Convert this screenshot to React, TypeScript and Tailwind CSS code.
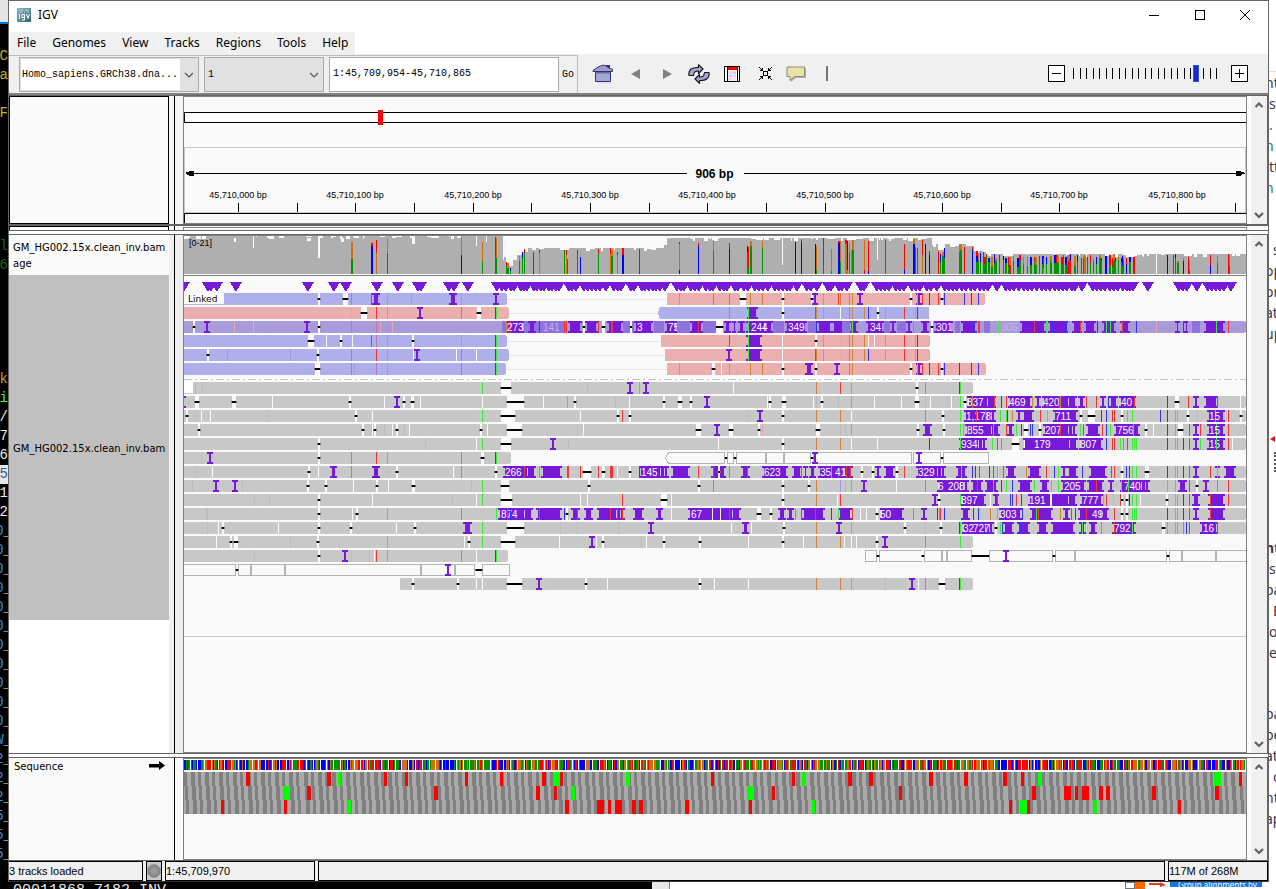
import React from "react";

const INK: Record<string, string> = {
  g: "#35ee35",
  o: "#cc8433",
  r: "#f23434",
  b: "#3434f2",
  w: "#fafafa",
  k: "#bcbcbc",
  m: "#b478b4",
  n: "#e8a8b0",
  y: "#9c9ce0",
};
const BLUE = "#afafeb";
const PINK = "#ebafaf";
const GRAY = "#c8c8c8";
const LILAC = "#a99bd9";
const INS = "#7719d9";
const BASE: Record<string, string> = { g: "#009600", b: "#0000ff", r: "#ff0000", o: "#d17105" };

function makeRandom(seed: number) {
  let s = seed;
  return () => {
    s = (s * 1103515245 + 12345) % 2147483648;
    return s / 2147483648;
  };
}

/*
 * Each read row is a string of marks:
 *   a letter and x        one-pixel mismatch line
 *   d a[-b]               deletion
 *   i x                   small insertion
 *   p a-b                 wide insertion
 *   l a-b                 pale insertion
 *   t x:label             insertion size
 *   u x:label             pale insertion size
 */
type Row = { y: number; segs: [number, number, string][]; boxes?: [number, number][]; thin?: [number, number]; marks: string };

const TAIL = "b1167 g1175 g1177 b1183 r1189 i1196";
const ROWS: Row[] = [
  { y: 293, segs: [[184, 507, BLUE], [667, 985, PINK]], thin: [507, 667], marks: "d319 d343-348 o351 r371 p372-380 g387 y411 p449-457 y461 i496 b495 g679 o713 n722 m729 d740-746 o750 o762 d783 d811-813 i815 g823 r838 o840 o849 o852 i860 d911 p916-922 g917 r922 b929 r938 d941-943 b944 b964 b971 b978" },
  { y: 307, segs: [[184, 509, PINK], [660, 929, BLUE]], thin: [509, 660], marks: "n190 n351 d361-367 r376 g387 i420 o461 d477-481 b495 g496 m729 p747-758 g748 d783 r815 o816 g823 w840 o849 o852 o864 b868 d878 g885 r904 g915 b917" },
  { y: 321, segs: [[184, 1246, LILAC]], marks: "d194 i207 n234 y241 n253 y268 i307 d319 o351 m376 n380 g387 n392 y461 y469 l502-508 p506-524 o506 r510 r524 t507:273 l524-540 l540-566 u543:141 p528-536 b533 b539 r564 r566 p568-582 b577 d584 p585-598 r598 d602-605 p607-623 r611 r612 l623-634 d631 p634-653 t637:3 l654-664 p665-677 t668:75 l677-690 p690-703 r698 l703-716 d716-723 p724-731 p732-736 p738-745 p746-773 g748 t751:244 l773-784 p785-807 t788:349 l808-816 p817-832 b816 b823 p832-845 r845 l842-850 p850-858 r851 g852 p866-884 t870:34 l884-890 p890-896 l897-906 p906-912 o913 p921-929 d931-933 p934-953 t936:301 l955-960 p961-977 b974 r978 r979 l984-990 g998 u1001:305 p1020-1046 r1034 g1046 p1048-1068 b1052 b1066 p1072-1082 r1080 p1084-1096 b1097 r1106 p1102-1116 g1106 g1110 p1120-1130 r1122 g1133 g1135 b1136 n1156 g1175 p1175-1180 b1183 p1184-1188 l1192-1200 p1204-1225 g1216 r1228" },
  { y: 335, segs: [[184, 507, BLUE], [661, 930, PINK]], thin: [507, 661], marks: "d308-314 w326 d340-342 w352 r371 m376 g387 d413 y461 b495 g496 r729 p746-762 g748 w782 d816 g823 n840 o849 o852 o864 w868 w874 g885 r904 g915 b917" },
  { y: 349, segs: [[184, 509, BLUE], [665, 930, PINK]], thin: [509, 665], marks: "d208 y227 y290 d318 o351 r376 g387 w413 i417 w456 o461 w476 b495 g496 i729 p746-762 g748 w782 r815 o816 g823 n840 o849 o852 o864 b868 g885 r904 g915 b917" },
  { y: 363, segs: [[184, 506, BLUE], [667, 986, PINK]], thin: [506, 667], marks: "d315-320 o351 y354 m376 g387 o461 b495 g496 g679 d712-715 w721 g729 n736 o750 o762 d783 p805-813 d816 i837 o849 o852 d911 p916-922 g917 r922 b929 r938 d941-943 b944 b959 b971 b978" },
  { y: 382, segs: [[184, 973, GRAY]], marks: "k195 k202 g482 d501-511 k587 i630 y639 i646 w733 o816 r840 g851 d917 o925 b959 g960" },
  { y: 396, segs: [[184, 1246, GRAY]], marks: "i183 d195-199 d232-236 w272 d350 w384 i397 d404 d411-414 w420 w482 d507-524 w543 g567 d575 k615 w629 d664 d678-682 d691 i707 w767 d770 d782-786 w813 k816 d821-823 k838 g851 w874 w901 d915-919 k925 w930 k947 w951 g960 d965 p967-996 t967:837 o972 r994 b1001 r1006 p1008-1032 t1009:469 o1032 p1035-1041 p1042-1077 t1043:420 r1059 o1060 p1078-1085 r1086 r1096 p1100-1106 b1108 p1109-1118 p1119-1136 t1121:40 r1134 b1167 d1175-1179 r1188 i1196 p1204-1218 r1217 w1240" },
  { y: 410, segs: [[184, 1246, GRAY]], marks: "d187 k195 w201 w210 k267 d356 w372 g482 d501-515 w580 d618 r622 d630 k748 i760 d783 o816 o840 w851 o925 d943 g960 p964-996 t966:1,178 r976 r985 g1000 g1006 b1007 o1012 p1016-1022 p1022-1034 r1040 g1047 p1053-1078 t1055:711 d1081 d1088-1095 b1101 b1106 r1112 r1114 d1122 g1127 g1132 b1160 b1167 g1175 g1177 d1188 k1197 p1207-1225 g1215 t1209:15 r1228 d1241" },
  { y: 424, segs: [[184, 1246, GRAY]], marks: "d199 d363 w372 d375 k384 w392 d397 k404 w409 d481 w487 d507-522 k577 w583 d696-701 i717 d729-733 d759 n762 d816-820 k840 k845 g851 d918 p923-932 d944 g960 p965-1000 t967:855 g993 g963 r1006 p1007-1014 g1016 b1021 d1024-1028 b1030 b1032 d1040 p1043-1077 t1045:207 r1060 g1080 r1083 p1086-1100 r1102 b1106 g1110 p1114-1140 t1117:756 g1133 d1146 w1153 b1167 g1175 d1178-1183 r1189 i1196 r1200 p1207-1225 g1216 t1209:15 r1228" },
  { y: 438, segs: [[184, 1246, GRAY]], marks: "d319 k425 w476 g482 d501-511 i553 k568 w718 d783 o816 o840 w851 w877 b929 p959-987 t961:934 g960 g992 r997 o1001 d1012-1019 w1024 p1023-1078 t1034:179 p1079-1103 t1080:807 b1106 r1112 r1114 g1120 o1123 r1127 g1132 g1134 g1136 " + TAIL + " g1200 p1207-1225 t1209:15 g1216 r1228 w1232" },
  { y: 452, segs: [[184, 511, GRAY]], boxes: [[665, 725], [727, 734], [736, 766], [766, 784], [784, 811], [813, 912], [913, 941], [943, 989]], marks: "k201 i210 d319 o351 r376 g387 o461 d481-484 b495 g496 d726 d735 d812 i815 i919 d942" },
  { y: 466, segs: [[184, 1246, GRAY]], marks: "k195 w212 d309 w318 p330-337 o351 p372-380 k387 d397 w453 o461 d496 p503-536 t505:266 b522 r524 o539 p541-562 r567 r568 r580 d583-591 r598 d602-605 r610 r611 r612 w617 d630 p639-669 b639 t641:145 p671-690 r698 p711-726 r713 d719 o729 p741-750 r747 p762-788 t764:623 p792-802 r801 p803-808 p809-816 p818-853 t820:35 t835:41 r846 r850 g831 d862 d873 i878 p884-895 d897 r904 p916-946 t918:329 p956-967 g961 b972 b975 r979 b989 r993 g997 r1003 p1006-1016 o1026 p1028-1041 r1046 b1054 g1058 p1061-1067 p1067-1078 b1082 p1089-1107 r1111 r1114 d1122 b1126 b1129 g1132 g1136 d1145-1149 " + TAIL + " r1210 p1215-1220 g1217 p1224-1236" },
  { y: 480, segs: [[184, 1246, GRAY]], marks: "k192 i216 i235 k242 d308 d326 w353 d377 w388 d412-415 k471 g482 d501-509 d589 d699 o713 d783 d809 o816 y840 k845 g851 i864 w896 o925 p937-969 t938:6 t948:208 p971-983 r977 p985-998 g993 b1001 g1006 b1012 p1018-1032 g1034 p1040-1049 g1051 g1058 p1061-1086 t1064:205 p1087-1104 r1096 p1108-1114 p1120-1150 t1124:740 g1121 g1128 y1167 g1175 p1178-1187 r1189 d1197 i1206 o1217 r1228" },
  { y: 494, segs: [[184, 1246, GRAY]], marks: "k254 k269 d319 w372 k452 w476 g482 d501-512 w580 w587 r622 d661-667 w671 d783 o816 w837 r840 i935 d939 g960 p961-986 t961:897 w990 p993-999 r997 b1010 b1012 r1016 b1021 p1028-1077 t1029:191 w1050 w1051 p1080-1103 t1082:777 g1103 r1106 n1113 r1120 d1122 d1127 b1129 g1132 g1136 w1140 d1167 g1175 g1177 b1183 r1189 p1192-1200 p1208-1225 r1210 r1228" },
  { y: 508, segs: [[184, 1246, GRAY]], marks: "k206 k207 d319 w352 d357 g387 o461 g496 p498-533 t501:874 r507 b510 p536-562 r539 b564 d567 p571-580 r577 p584-593 p597-625 r610 r617 r622 p633-644 p656-663 w671 p688-741 t691:67 w712 w720 r729 d757-761 d771 p778-786 p787-794 o795 r801 p802-825 r815 b831 p838-852 g838 r852 w860 w866 d877 p880-904 t880:50 o913 p921-927 b937 o939 r940 b944 p961-970 b973 b978 o990 g997 p999-1022 t1000:303 b1022 p1030-1053 r1038 g1036 o1060 p1063-1070 r1071 b1075 p1078-1109 r1086 t1092:49 r1114 d1122 d1127 g1132 g1134 g1136 " + TAIL + " p1208-1225 r1210" },
  { y: 522, segs: [[184, 1246, GRAY]], marks: "k207 w218 d222-224 w278 d319 d351 w396 d415 p463-472 g482 d507-524 k560 k577 k618 i651 w731 p742-749 w751 d783-785 o816 i839 g851 d905 k925 d941 b959 g960 p962-994 t963:32 t973:727 d996 g1000 b1002 p1003-1014 p1017-1030 b1020 p1037-1048 p1051-1075 p1079-1086 g1082 p1089-1097 o1101 p1112-1136 r1114 t1114:792 g1132 d1162-1165 y1167 g1175 g1177 o1183 b1186 r1189 p1200-1218 t1203:16 r1217" },
  { y: 536, segs: [[184, 973, GRAY]], marks: "w216 d231 d234-238 k290 d318 y387 w464 d469 g482 d501-515 w559 i592 w596 d603 k641 w646 d664 d700 w748 d783 w803 o816 o840 w844 w851 w856 d877 i885 o925 g960" },
  { y: 550, segs: [[184, 508, GRAY]], boxes: [[865, 877], [879, 923], [924, 942], [942, 947], [947, 972], [989, 1053], [1055, 1075], [1075, 1167], [1169, 1182], [1182, 1216], [1216, 1247]], marks: "k254 d319 i345 k351 k369 w374 r376 g387 o461 w476 b495 g496 d878 d923 d972-989 i1006 d1054 d1168" },
  { y: 564, segs: [], boxes: [[180, 236], [238, 251], [251, 285], [285, 421], [421, 455], [455, 475], [482, 510]], marks: "d237 i448 d476-482" },
  { y: 578, segs: [[400, 973, GRAY]], marks: "d413 d458 w476 w482 d507-522 i539 d586 w607 d700 w714 w748 o816 o840 g851 k885 i912 w918 o925 d939-945 b959 g960" },
];

function Mark({ mark, y }: { mark: string; y: number }) {
  const kind = mark[0];
  const [head, label] = mark.slice(1).split(":");
  const [a, bRaw] = head.split("-").map(Number);
  if (kind === "t" || kind === "u") {
    return (
      <text x={a} y={y + 10} fontSize="10" fill={kind === "t" ? "#fff" : "#c4b4ec"}>
        {label}
      </text>
    );
  }
  if (kind === "d") {
    const from = bRaw ? a : a - 1;
    const to = bRaw || a + 1;
    return (
      <g>
        <rect x={from} y={y} width={to - from} height={12} fill="#fafafa" />
        <rect x={from - 1} y={y + 5} width={to - from + 2} height={2} fill="#777" />
        <rect x={from} y={y + 5} width={to - from} height={2} fill="#000" />
      </g>
    );
  }
  if (kind === "i") {
    return (
      <g fill={INS}>
        <rect x={a - 3} y={y} width={6} height={2} />
        <rect x={a - 1} y={y} width={2} height={12} />
        <rect x={a - 3} y={y + 10} width={6} height={2} />
      </g>
    );
  }
  if (kind === "p") {
    const w = bRaw - a;
    return (
      <g fill={INS}>
        <rect x={a} y={y} width={w} height={2} />
        <rect x={a + 2} y={y} width={Math.max(1, w - 4)} height={12} />
        <rect x={a} y={y + 10} width={w} height={2} />
        {w > 26 && w % 2 === 0 && <rect x={bRaw - 5} y={y + 2} width={1} height={8} fill="#c9bfe6" />}
        {w > 26 && <rect x={bRaw - 9} y={y + 2} width={1} height={8} fill="#c9bfe6" />}
      </g>
    );
  }
  if (kind === "l") return <rect x={a} y={y} width={bRaw - a} height={12} fill="#8f72dc" />;
  return <rect x={a} y={y} width={1} height={12} fill={INK[kind]} />;
}

function Reads() {
  return (
    <g>
      {ROWS.map((row) => (
        <g key={row.y}>
          {row.thin && <rect x={row.thin[0]} y={row.y + 6} width={row.thin[1] - row.thin[0]} height={1} fill="#e4e4e4" />}
          {row.segs.map(([a, b, c]) => (
            <path
              key={a}
              fill={c}
              d={a === 660 ? `M${a} ${row.y}H${b}v12H${a}l-2 -6z` : `M${a} ${row.y}H${b - 1}l1 2v8l-1 2H${a}z`}
            />
          ))}
          {row.boxes?.map(([a, b]) =>
            a === 665 ? (
              <path key={a} d="M668.5 452.5H724.5V463.5H668.5L665.5 458z" fill="#fafafa" stroke="#b4b4b4" />
            ) : (
              <rect key={a} x={a + 0.5} y={row.y + 0.5} width={b - a - 1} height={11} fill="#fafafa" stroke="#b4b4b4" />
            ),
          )}
          {row.marks.split(" ").map((m, i) => (
            <Mark key={i} mark={m} y={row.y} />
          ))}
        </g>
      ))}
      <rect x={184} y={382} width={9} height={11} fill="#fff" />
    </g>
  );
}

// x, width, then base letter and the y where that colour starts
const COVERAGE_BARS =
  "351 2 o242 g259;371 2 r243 b246;376 1 r240 o253 g273;387 1 o239 b254 g255;461 1 o236 b255;482 1 o242 g261;495 1 r237 g257;496 1 o238 g258;" +
  "506 1 r262 g266;507 2 o263 g268;510 1 b268 g271;519 1 o256 g261;522 1 b252 g258;524 1 r249 g253;533 1 r252 b273;539 1 r250 o253;564 1 g250;566 1 r250 o255;567 1 g259;577 1 r250 g254;580 1 b257;598 1 r249 g254;610 1 r248 o254;611 2 o250 g256;617 1 r252 o255;622 2 r248 b255;639 1 r249 b273;" +
  "679 1 r242 o244 b270;698 1 r243 b246;713 1 o241 g251;729 1 r243 b249;747 1 b246 g252;748 1 r247 g268;750 2 o241 g246;762 1 o241 g248;795 1 b242;801 1 r239 b243;815 1 b244;816 1 o246 g270;823 1 r238 g265;831 1 o249 g271;838 2 r241 b243;840 1 o241 g262;845 2 r240 o244;847 1 b241 o270;849 1 o243 g252;851 1 o250;852 2 o240 g250;" +
  "864 1 o240 r270;868 1 r241 b271;885 1 r240 g241;904 1 r244 b270;913 2 o239 b244;915 1 g247;917 1 r248 g251;922 1 r240 o255;925 1 b244;929 1 r251 b255;938 1 o250 r252;940 1 b254 g262;942 2 o252 g256;944 1 b248 g258;959 1 o244 g252;960 2 o244 g250;964 1 r247 b273;972 1 r247 b250;976 2 r251 b256 g262;978 1 o253 g260;980 1 b253 g262;983 1 r252 g262;" +
  "1167 1 b255;1173 1 g255;1175 1 b254 g258;1177 2 o261 g263;1183 1 o258 b261;1188 1 r257;1189 1 o260 g270;1210 1 r255 b265;1217 1 o256 g263;1228 1 r254;1229 1 o255 g266";

function coverageTop(x: number) {
  if (x < 500) return 236;
  if (x < 503) return 247;
  if (x < 506) return 257;
  if (x < 511) return 266;
  if (x < 515) return 260;
  if (x < 522) return 255;
  if (x < 524) return 252;
  if (x < 662) return 248;
  if (x < 667) return 245;
  if (x < 929) return 238;
  if (x < 938) return 244;
  if (x < 945) return 250;
  if (x < 972) return 244;
  if (x < 984) return 251;
  return 254;
}

function Coverage() {
  const rnd = makeRandom(11);
  const cols: React.ReactNode[] = [];
  let x = 184;
  while (x < 1246) {
    const w = 1 + Math.floor(rnd() * 5);
    const low = coverageTop(x);
    const dip = rnd() < 0.45 ? Math.floor(rnd() * 4) : 0;
    const width = Math.min(w, 1246 - x, x < 667 && x + w > 667 ? 667 - x : w);
    cols.push(<rect key={x} x={x} y={low + dip} width={width} height={274 - low - dip} fill="#afafaf" />);
    x += width;
  }
  const palette = ["g", "r", "b", "o"];
  const noise: React.ReactNode[] = [];
  for (let nx = 984; nx < 1137; nx += 1 + Math.floor(rnd() * 4)) {
    let y = 254 + Math.floor(rnd() * 5);
    const upper = palette[1 + Math.floor(rnd() * 3)];
    const split = y + 3 + Math.floor(rnd() * 8);
    const lower = rnd() < 0.75 ? "g" : palette[Math.floor(rnd() * 4)];
    const wide = rnd() < 0.45 ? 2 : 1;
    noise.push(<rect key={`u${nx}`} x={nx} y={y} width={wide} height={split - y} fill={BASE[upper]} />);
    y = split;
    noise.push(<rect key={`l${nx}`} x={nx} y={y} width={wide} height={274 - y} fill={BASE[lower]} />);
  }
  return (
    <g>
      {cols}
      <path fill="#fafafa" d="M318 236h2v22h-2zM253 236h1v12h-1zM234 238h2v4h-2zM307 238h4v3h-4zM341 238h3v4h-3zM412 237h3v7h-3zM476 236h1v10h-1zM486 236h1v6h-1zM782 238h1v27h-1zM877 238h1v22h-1zM1156 254h1v20h-1z" />
      {noise}
      {COVERAGE_BARS.split(";").map((bar) => {
        const [bx, bw, ...parts] = bar.split(" ");
        return parts.map((p, i) => {
          const top = Number(p.slice(1));
          const next = parts[i + 1] ? Number(parts[i + 1].slice(1)) : 274;
          return <rect key={bx + p} x={bx} y={top} width={bw} height={next - top} fill={BASE[p[0]]} />;
        });
      })}
      <text x="189" y="246" fontSize="9" fill="#000">
        [0-21]
      </text>
    </g>
  );
}

const INSERTION_MARKERS = [
  184, 208, 211, 217, 236, 308, 334, 346, 377, 398, 418, 421, 449, 454, 468, 497, 502, 506, 511, 514, 521, 524, 527, 534, 537, 541, 544, 549, 552, 556, 559,
  569, 572, 576, 584, 588, 592, 596, 600, 606, 614, 618, 621, 631, 634, 642, 645, 649, 653, 656, 660, 665, 677, 681, 684, 691, 695, 699, 706, 710, 713, 720,
  724, 727, 735, 738, 744, 748, 755, 759, 763, 768, 775, 779, 783, 787, 790, 797, 807, 811, 817, 828, 831, 839, 842, 847, 861, 864, 877, 881, 885, 889, 896,
  900, 904, 912, 916, 920, 927, 931, 937, 945, 949, 953, 957, 962, 966, 971, 975, 980, 984, 988, 997, 1006, 1010, 1014, 1019, 1024, 1028, 1032, 1037, 1042,
  1046, 1050, 1055, 1059, 1063, 1067, 1072, 1075, 1082, 1093, 1097, 1101, 1105, 1110, 1114, 1118, 1123, 1127, 1130, 1133, 1148, 1179, 1183, 1187, 1197, 1208,
  1212, 1216, 1220, 1224, 1231,
];

function TrackCanvas() {
  return (
    <svg className="block h-full w-full font-['Liberation_Sans',sans-serif]" shapeRendering="crispEdges" role="img" aria-label="Coverage and alignments">
      <g transform="translate(-184 -236)">
        <Coverage />
        <rect x="184" y="275" width="1062" height="1" fill="#808080" />
        {INSERTION_MARKERS.map((c) => (
          <path key={c} d={`M${c - 6} 282h12l-6 10z`} fill={INS} />
        ))}
        <Reads />
        <rect x="184" y="293" width="40" height="11" fill="#fff" />
        <line x1="184" x2="1246" y1="379.5" y2="379.5" stroke="#c4c4c4" strokeDasharray="8 3 2 3" />
        <rect x="184" y="636" width="1062" height="1" fill="#c8c8c8" />
      </g>
    </svg>
  );
}

const CODONS = [
  "r246-250 r327-331 g338-341 r384-387 r405-408 r465-468 r500-503 r542-546 g553-560 r560-563 g626-630 r711-714 r792-795 g802-806 r848-852 r869-873 r929-933 r964-968 r1003-1007 r1021-1024 g1038-1042 g1214-1221 r1239-1242",
  "g283-290 r307-311 r434-438 r536-540 r554-557 g571-575 g747-754 r772-775 r899-902 r1032-1036 r1064-1071 r1075-1078 r1082-1089 r1099-1103 r1106-1110 r1152-1156 r1215-1219",
  "r221-224 r284-287 g347-351 r565-569 r597-604 r608-611 r615-622 r632-636 r639-643 r685-689 r749-752 g812-815 r1009-1012 g1020-1027 r1027-1030 g1093-1097 r1178-1181",
];

function SequenceCanvas() {
  const rnd = makeRandom(5);
  const letters = ["g", "b", "r", "o"];
  const bases: React.ReactNode[] = [];
  let last = "g";
  for (let i = 0; i < 906; i++) {
    if (rnd() > 0.3) last = letters[Math.floor(rnd() * 4)];
    const x = 184 + Math.floor((i * 1062) / 906);
    bases.push(<rect key={i} x={x} y={760} width={1} height={10} fill={BASE[last]} />);
  }
  return (
    <svg className="block h-full w-full" shapeRendering="crispEdges" role="img" aria-label="Reference sequence">
      <g transform="translate(-184 -759)">
        <rect x="184" y="760" width="1062" height="10" fill="#fff" />
        {bases}
        {CODONS.map((cells, r) => (
          <g key={r}>
            <rect x="184" y={772 + r * 14} width="1062" height="14" fill="#a9a9a9" />
            {Array.from({ length: 152 }, (_, i) => (
              <rect key={i} x={Math.round(184 + r + i * 7.03)} y={772 + r * 14} width={i % 2 ? 4 : 3} height="14" fill="#808080" />
            ))}
            {cells.split(" ").map((c) => {
              const [a, b] = c.slice(1).split("-").map(Number);
              return <rect key={c} x={a} y={772 + r * 14} width={b - a} height="14" fill={c[0] === "r" ? "#ff0000" : "#00ff00"} />;
            })}
          </g>
        ))}
      </g>
    </svg>
  );
}

function RulerCanvas() {
  return (
    <svg className="block h-full w-full font-['Liberation_Sans',sans-serif]" shapeRendering="crispEdges" role="img" aria-label="Chromosome ruler">
      <g transform="translate(-184 -97)">
        <rect x="184.5" y="112.5" width="1065" height="10" fill="#fff" stroke="#000" />
        <rect x="378" y="110" width="5" height="15" fill="#ff0000" />
        <path d="M184.5 212V147.5H1245.5V212.5H184" fill="none" stroke="#c8c8cf" />
        <path d="M184.5 223V213.5H1246" fill="none" stroke="#000" />
        <path d="M186 173.5H687M744 173.5H1245" stroke="#000" />
        <path d="M185 173l5 -2h4v5h-4zM1245 173l-5 -2h-4v5h4z" fill="#000" />
        <text x="714.5" y="178" fontSize="12" fontWeight="700" textAnchor="middle">
          906 bp
        </text>
        {Array.from({ length: 18 }, (_, i) => (
          <rect key={i} x={Math.round(238 + i * 58.67)} y="203" width="1" height="9" fill="#000" />
        ))}
        {Array.from({ length: 9 }, (_, i) => (
          <text key={i} x={Math.round(238 + i * 117.33)} y="198" fontSize="9" textAnchor="middle">
            {`45,710,${i}00 bp`}
          </text>
        ))}
      </g>
    </svg>
  );
}

function Chevron({ up = false, light = false }: { up?: boolean; light?: boolean }) {
  return (
    <svg width="10" height="8" viewBox="0 0 10 8" fill="none" stroke={light ? "#555" : "#606060"} strokeWidth={light ? 1.2 : 2.2} aria-hidden="true">
      <path d={up ? "M1.5 6L5 2.5L8.5 6" : "M1 2L5 6L9 2"} />
    </svg>
  );
}

function ScrollRail() {
  return (
    <div className="flex w-[21px] shrink-0 border-r border-[#646464] bg-[#fafafa] pl-[3px]">
      <div className="flex flex-1 flex-col items-center justify-between border-l border-white bg-[#f0f0f0] py-[5px]">
        <button aria-label="Scroll up">
          <Chevron up />
        </button>
        <button aria-label="Scroll down">
          <Chevron />
        </button>
      </div>
    </div>
  );
}

function PanelRow({ className, gutter, name, children }: { className: string; gutter: string; name: React.ReactNode; children: React.ReactNode }) {
  return (
    <div className={`flex ${className}`}>
      <div className="flex w-40 shrink-0 flex-col">{name}</div>
      <div className={`w-[5px] shrink-0 ${gutter}`} />
      <div className="w-px shrink-0 bg-black" />
      <div className={`w-2 shrink-0 ${gutter}`} />
      <div className="min-w-0 flex-1 overflow-hidden border border-[#808080] bg-[#fafafa]">{children}</div>
      <ScrollRail />
    </div>
  );
}

const ICON_BUTTON = "flex shrink-0 items-center justify-center";

function Toolbar() {
  return (
    <div className="flex h-[39px] shrink-0 items-stretch bg-[#f0f0f0]">
      <div className="mt-px flex border-t border-r border-[#bcbcbc] pt-px pb-px pl-[10px] font-['Liberation_Mono',monospace] text-[10px] text-black">
        <div className="relative flex w-[180px] border border-[#a9a9a9] bg-[#e1e1e1] p-px">
          <select aria-label="Genome" className="w-full appearance-none bg-[linear-gradient(to_right,#fff_159px,#e1e1e1_159px)] pl-px">
            <option>Homo_sapiens.GRCh38.dna...</option>
          </select>
          <span className="pointer-events-none absolute top-[13px] right-1">
            <Chevron light />
          </span>
        </div>
        <div className="relative ml-[5px] flex w-[120px] border border-[#a9a9a9]">
          <select aria-label="Chromosome" className="w-full appearance-none bg-[#e1e1e1] pl-[3px]">
            <option>1</option>
          </select>
          <span className="pointer-events-none absolute top-[13px] right-1">
            <Chevron light />
          </span>
        </div>
        <input aria-label="Locus" defaultValue="1:45,709,954-45,710,865" className="ml-[5px] w-[230px] border border-[#a9a9a9] bg-white px-[3px] pb-[3px] outline-none" />
        <button className="w-[18px]">Go</button>
      </div>
      <div className="flex items-center pl-[14px]">
        <button aria-label="Home" className={`${ICON_BUTTON} w-[22px]`}>
          <svg width="22" height="20" viewBox="0 0 22 20">
            <path d="M14 1h4v5h-4z" fill="#333366" />
            <path d="M1 6.5L7 2.5L12 1L20.5 5.5V7.5H1z" fill="#9c9cce" stroke="#333366" />
            <path d="M3.5 8H18.5V17.5H3.5z" fill="#a5a5d6" stroke="#333366" />
            <path d="M3 9h16" stroke="#666699" />
            <path d="M5 19h15" stroke="#d6d6f0" />
          </svg>
        </button>
        <button aria-label="Back" className={`${ICON_BUTTON} ml-[13px] w-4`}>
          <svg width="9" height="10" viewBox="0 0 9 10">
            <path d="M9 0V10L0 5z" fill="#808080" />
          </svg>
        </button>
        <button aria-label="Forward" className={`${ICON_BUTTON} ml-4 w-4`}>
          <svg width="9" height="10" viewBox="0 0 9 10">
            <path d="M0 0V10L9 5z" fill="#808080" />
          </svg>
        </button>
        <button aria-label="Refresh" className={`${ICON_BUTTON} ml-[13px] w-[22px]`}>
          <svg width="22" height="20" viewBox="0 0 22 20" fill="#a3a3d6" stroke="#111" strokeWidth="1.1" strokeLinejoin="round">
            <path d="M1 11.500C0 6 4 3 10.500 3.500V0.700L15 5L10.500 9.500V7C7 7 6 8 5.500 11.500z" />
            <path d="M21 8.500C22 14 18 17 11.500 16.500V19.300L7 15L11.500 10.500V13C15 13 16 12 16.500 8.500z" />
          </svg>
        </button>
        <button aria-label="Region of interest" className={`${ICON_BUTTON} ml-[14px] w-4`}>
          <svg width="16" height="16" viewBox="0 0 16 16" shapeRendering="crispEdges">
            <rect x=".5" y=".5" width="15" height="15" fill="#fff" stroke="#000" />
            <rect x="4" y="4" width="8" height="11" fill="#e8e8fa" />
            <path d="M5 6h3v2h-3zM9 9h3v2h-3zM5 12h2v2h-2z" fill="#f6d0d8" />
            <path d="M9 6h3v2h-3zM5 9h3v2h-3z" fill="#c8c8f4" />
            <rect x="4" y="1" width="9" height="3" fill="#ff0000" />
            <path d="M3.500 1v14M13.500 1v14" stroke="#000" />
          </svg>
        </button>
        <button aria-label="Fit window" className={`${ICON_BUTTON} ml-[18px] w-[14px]`}>
          <svg width="13" height="13" viewBox="0 0 13 13" shapeRendering="crispEdges">
            <path
              d="M4 4h5v5h-5zM5 5v3h3v-3zM0 0h1v1h-1zM1 1h1v1h-1zM2 2h1v1h-1zM3 1h1v3h-3v-1h2zM12 0h1v1h-1zM11 1h1v1h-1zM10 2h1v1h-1zM9 1h1v2h2v1h-3zM0 12h1v1h-1zM1 11h1v1h-1zM2 10h1v1h-1zM1 9h3v3h-1v-2h-2zM12 12h1v1h-1zM11 11h1v1h-1zM10 10h1v1h-1zM9 9h3v1h-2v2h-1z"
              fill="#000"
              fillRule="evenodd"
            />
          </svg>
        </button>
        <button aria-label="Popup text" className={`${ICON_BUTTON} ml-[14px] w-5`}>
          <svg width="20" height="17" viewBox="0 0 20 17">
            <path d="M2 3H20V13H10L5 17" fill="#b0b0b0" />
            <path d="M1 2H18.500V11.500H8.500L4 15.500V11.500H1z" fill="#e8e4a8" stroke="#8c8c78" />
          </svg>
        </button>
        <span className="ml-5 h-[15px] w-0.5 bg-[#777]" />
      </div>
      <div className="ml-auto flex items-center pr-5">
        <button aria-label="Zoom out" className="flex size-[17px] items-center justify-center border border-black bg-white">
          <span className="h-px w-[9px] bg-black" />
        </button>
        <div className="relative mx-2 h-[17px] w-[150px]">
          <svg className="block" width="150" height="17" shapeRendering="crispEdges" aria-hidden="true">
            {Array.from({ length: 24 }, (_, i) => (
              <rect key={i} x={Math.round(i * 6.5)} y="3" width="1" height="11" fill="#000" />
            ))}
            <rect x="120" y="0" width="6" height="17" fill="#3c50c8" />
            <rect x="121" y="1" width="4" height="15" fill="#1428d2" />
          </svg>
          <input type="range" aria-label="Zoom level" min="0" max="23" defaultValue="19" className="absolute inset-0 w-full opacity-0" />
        </div>
        <button aria-label="Zoom in" className="flex size-[17px] items-center justify-center border border-black bg-white">
          <svg width="9" height="9" viewBox="0 0 9 9" stroke="#000" shapeRendering="crispEdges">
            <path d="M0 4.500h9M4.500 0v9" />
          </svg>
        </button>
      </div>
    </div>
  );
}

const TERMINAL: [string, string][] = [
  ["VC", "text-[#c8b400]"], ["ea", "text-[#c8b400]"], ["", ""], ["YF", "text-[#c8b400]"], ["", ""], ["", ""], ["", ""], ["", ""], ["", ""], ["", ""],
  ["al", "text-[#0a6b0a]"], ["16", "text-[#0a6b0a]"], ["", ""], ["", ""], ["", ""], ["", ""], ["", ""], ["ak", "text-[#c89a1e]"], ["pi", "text-[#3cf03c]"],
  ["C/", "text-[#d8e8f8]"], ["-7", "text-[#e8e8e8]"], ["_6", "text-[#e8e8e8]"], ["45", "bg-[#e8e8e8] text-[#2860a0]"], ["_1", "text-[#e8e8e8]"], ["_2", "text-[#e8e8e8]"],
];
const TERMINAL_TAIL = ["0", "0", "0", "0", "0", "0", "0", "0", "0", "0", "0", "W", "2", "2", "2", "5", "5", "5"];

function TerminalEdge() {
  return (
    <div className="flex w-2 shrink-0 flex-col overflow-hidden bg-black font-['Liberation_Mono',monospace] text-sm leading-[19px]">
      <div className="h-6 shrink-0 border-b-2 border-[#0078d7] bg-[#e5e5e5]" />
      <div className="flex flex-col pt-[23px]">
        {TERMINAL.map(([text, tone], i) => (
          <div key={i} className={`flex h-[19px] shrink-0 justify-end ${tone}`}>
            {text}
          </div>
        ))}
        {TERMINAL_TAIL.map((text, i) => (
          <div key={i} className="flex h-[19px] shrink-0 justify-end text-[#3c8cdc]">
            {text}
            <span className="-mr-1 text-[#e8e8e8]">_</span>
          </div>
        ))}
      </div>
    </div>
  );
}

function DocumentEdge() {
  const block = "flex flex-col items-start";
  return (
    <div className="w-[7px] shrink-0 overflow-hidden bg-white font-['Noto_Sans',sans-serif] text-sm leading-[21px] text-[#333a4a]">
      <div className="h-[72px] border-b border-[#ddd]" />
      <div className={block}>
        <span className="-ml-1">nt</span><span>s</span><span className="text-[#2b6cb0]">.</span><span className="-ml-1 text-[#2b6cb0]">n</span><span>tte</span><span className="-ml-1 text-[#2b6cb0]">n</span>
      </div>
      <div className={`${block} pt-[41px]`}>
        <span className="pl-1">s</span><span className="-ml-1">op</span><span className="-ml-1">on</span><span className="-ml-1">ate</span><span className="-ml-1">up</span>
      </div>
      <div className="flex h-[193px] flex-col pt-[90px]">
        <svg width="7" height="10" viewBox="0 0 7 10">
          <path d="M1 5L6 2V8z" fill="#ee1111" />
        </svg>
        <span className="mt-2 ml-[5px] h-5 border-l-2 border-dotted border-[#555]" />
      </div>
      <div className={block}>
        <b className="-ml-1">nt</b><span>s</span><span className="-ml-1">pa</span><span className="pl-1">E</span><span>o</span><span>e</span>
      </div>
      <div className={`${block} pt-10`}>
        <span className="-ml-1">pa</span><span className="-ml-1">be</span><span className="-ml-1">at</span><span className="pl-1">c</span><span className="-ml-1">nt</span><span className="-ml-1">ap</span>
      </div>
    </div>
  );
}

const MENUS = ["File", "Genomes", "View", "Tracks", "Regions", "Tools", "Help"];

export default function App() {
  return (
    <div className="flex h-screen min-h-[640px] flex-col overflow-hidden bg-black">
      <div className="flex min-h-0 flex-1">
        <TerminalEdge />
        <main className="flex min-w-0 flex-1 flex-col border-x border-t border-[#666] bg-white text-black">
          <header className="flex h-[31px] shrink-0 items-center pb-[3px] font-['Noto_Sans',sans-serif] text-xs">
            <svg className="ml-2" width="14" height="14" viewBox="0 0 14 14" aria-hidden="true">
              <defs>
                <linearGradient id="logo" x1="0" y1="0" x2="1" y2="1">
                  <stop offset="0" stopColor="#8fb6c2" />
                  <stop offset="1" stopColor="#2f6478" />
                </linearGradient>
              </defs>
              <rect width="14" height="14" fill="url(#logo)" />
              <path d="M2 2h1M5 1v2M8 2h2M11 1v2M3 4h2M7 4h1M10 4h2" stroke="#c5dde4" />
              <path d="M2.500 6v5M7 6.500H5V9.500H7.500M7.500 6V12H5M9.500 6l1.500 4.500L12.500 6" stroke="#fff" fill="none" />
            </svg>
            <h1 className="ml-[7px]">IGV</h1>
            <div className="ml-auto flex items-center gap-[35px] pr-[18px]">
              <button aria-label="Minimize">
                <svg width="11" height="10" viewBox="0 0 11 10" stroke="#000" shapeRendering="crispEdges"><path d="M0 5.500h10" /></svg>
              </button>
              <button aria-label="Maximize">
                <svg width="10" height="10" viewBox="0 0 10 10" stroke="#000" fill="none" shapeRendering="crispEdges"><rect x=".5" y=".5" width="9" height="9" /></svg>
              </button>
              <button aria-label="Close">
                <svg width="10" height="10" viewBox="0 0 10 10" stroke="#000"><path d="M0 0l10 10M10 0L0 10" /></svg>
              </button>
            </div>
          </header>
          <nav className="flex h-[22px] shrink-0">
            <div className="ml-px flex items-center gap-4 bg-[#f0f0f0] px-[7px] font-['Noto_Sans',sans-serif] text-xs">
              {MENUS.map((m) => (
                <button key={m}>{m}</button>
              ))}
            </div>
          </nav>
          <Toolbar />
          <div className="h-[3px] shrink-0 border-b border-[#646464] bg-[#808080]" />

          <PanelRow className="h-32 shrink-0" gutter="bg-[#f5f5f5]" name={<div className="flex-1 border border-black bg-[#fafafa]" />}>
            <RulerCanvas />
          </PanelRow>
          <div className="h-0.5 shrink-0 bg-[#646464]" />
          <div className="flex h-1 shrink-0 bg-[#fafafa]">
            <div className="w-40 border border-b-0 border-black" />
            <div className="ml-[5px] w-px bg-black" />
            <div className="mt-px mr-[21px] ml-2 flex-1 border border-b-0 border-[#808080]" />
          </div>
          <div className="h-[5px] shrink-0 border-y border-[#646464] bg-white" />

          <PanelRow
            className="min-h-0 flex-1"
            gutter="bg-[#f0f0f0]"
            name={
              <div className="flex flex-1 flex-col bg-white font-['DejaVu_Sans',sans-serif] text-[10px] leading-4">
                <div className="h-10 overflow-hidden bg-[#fafafa] pt-[5px] pl-1 whitespace-nowrap">
                  <div>GM_HG002.15x.clean_inv.bam</div>
                  <div>age</div>
                </div>
                <div className="flex h-[345px] items-center overflow-hidden bg-[#c0c0c0] pt-0.5 pl-1 whitespace-nowrap">GM_HG002.15x.clean_inv.bam</div>
              </div>
            }
          >
            <div className="relative h-full">
              <TrackCanvas />
              <span className="absolute top-[57px] left-1 font-['DejaVu_Sans',sans-serif] text-[9px] leading-[12px]">Linked</span>
            </div>
          </PanelRow>
          <div className="h-[5px] shrink-0 border-y border-[#646464] bg-white" />

          <PanelRow
            className="h-[102px] shrink-0"
            gutter="bg-[#fafafa]"
            name={
              <div className="flex flex-1 items-start justify-between bg-[#fafafa] pt-px pr-1 pl-[5px] font-['DejaVu_Sans',sans-serif] text-[10px] leading-4">
                <span>Sequence</span>
                <svg className="mt-0.5" width="16" height="9" viewBox="0 0 16 9" aria-hidden="true">
                  <path d="M0 3H10V0L16 4.500L10 9V6.500H0z" />
                </svg>
              </div>
            }
          >
            <SequenceCanvas />
          </PanelRow>
          <div className="h-px shrink-0 bg-[#646464]" />
          <footer className="flex h-5 shrink-0 gap-[3px] bg-[#f0f0f0] font-['Liberation_Sans',sans-serif] text-[11px] leading-[18px]">
            <div className="w-[134px] border border-l-0 border-black">3 tracks loaded</div>
            <div className="flex w-4 items-center justify-center border border-black bg-[#c8c8c8]">
              <svg width="14" height="14" viewBox="0 0 14 14" aria-hidden="true">
                <path d="M4.500 1h5L13 4.500v5L9.500 13h-5L1 9.500v-5z" fill="#8c8c8c" stroke="#777" />
                <circle cx="7" cy="7" r="3" fill="#999" />
              </svg>
            </div>
            <div className="w-[150px] border border-black">1:45,709,970</div>
            <div className="flex-1 border border-black" />
            <div className="w-[100px] border border-black">117M of 268M</div>
          </footer>
          <div className="h-px shrink-0 bg-[#333]" />
        </main>
        <DocumentEdge />
      </div>
      <div className="flex h-[7px] shrink-0 overflow-hidden bg-white">
        <div className="w-[652px] shrink-0 overflow-hidden bg-black pl-[13px] font-['Liberation_Mono',monospace] text-[15px] leading-[18px] text-[#e8e8e8]">00011868 7182 INV</div>
        <div className="w-[18px] shrink-0 border-r border-[#888] bg-[#e8e8e8]" />
        <div className="ml-auto flex items-start pr-[14px] font-['Noto_Sans',sans-serif] text-[8px] text-white">
          <span className="h-[7px] w-[10px] border border-[#777]" />
          <span className="h-[7px] w-[10px] bg-[#ff6a00]" />
          <svg className="mx-1" width="17" height="6" viewBox="0 0 17 6"><path d="M0 1h12l-1 -1l6 3l-6 2v-2H0z" fill="#e23a1e" /></svg>
          <span className="h-[5px] w-[92px] overflow-hidden bg-[#1c74e0] pl-2 leading-[5px]">Group alignments by</span>
        </div>
      </div>
    </div>
  );
}
